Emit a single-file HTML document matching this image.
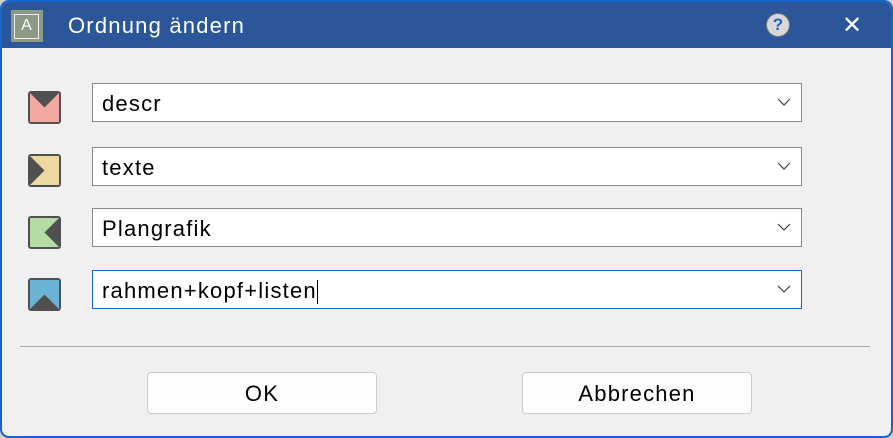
<!DOCTYPE html>
<html><head><meta charset="utf-8"><style>
*{margin:0;padding:0;box-sizing:border-box}
body{width:893px;height:438px;background:#cfcfcf;overflow:hidden;font-family:"Liberation Sans",sans-serif}
.win{position:absolute;left:0;top:0;width:893px;height:438px;border:2px solid #1466cc;border-radius:9px;background:#f0f0f0;overflow:hidden}
.title{position:absolute;left:0;top:0;width:100%;height:46px;background:#2b579a}
.title .t{position:absolute;left:66px;top:11px;color:#fff;font-size:22px;letter-spacing:1.2px}
.appi{position:absolute;left:9px;top:8px;width:32px;height:32px;background:#8c9a84}
.appi div{position:absolute;left:3px;top:4px;width:25px;height:25px;border:1.5px solid #eef;color:#fff;font-size:16px;text-align:center;line-height:22px}
.help{position:absolute;left:764px;top:11px;width:24px;height:24px;border-radius:50%;background:#d8d8d8;border:1.5px solid #777;color:#1c5fc7;font-weight:bold;font-size:17px;text-align:center;line-height:21px}
.close{position:absolute;left:840px;top:9px;color:#fff;font-size:24px}
.ic{position:absolute;left:26px;width:33px;height:33px;border:2px solid #505050;border-radius:3px;overflow:hidden}
.ic svg{display:block}
.f{position:absolute;left:90px;width:710px;height:39px;background:#fff;border:1px solid #8a8a8a;font-size:22px;letter-spacing:1.2px;padding-left:9px;padding-top:2px;line-height:36px;color:#000}
.f.a{border-color:#1466cc}
.f svg{position:absolute;right:10px;top:14px}
.sep{position:absolute;left:18px;top:344px;width:850px;height:1px;background:#a8a8a8}
.btn{position:absolute;top:370px;width:230px;height:42px;background:#fdfdfd;border:1px solid #cbcbcb;border-radius:4px;text-align:center;font-size:22px;letter-spacing:1.2px;line-height:42px;color:#000}
</style></head><body>
<div class="win">
<div class="title"><div class="appi"><div>A</div></div><div class="t">Ordnung ändern</div><div class="help">?</div><div class="close">✕</div></div>

<div class="ic" style="top:89px"><svg width="29" height="29"><rect width="29" height="29" fill="#f0a8a0"/><polygon points="0,0 29,0 14.5,14.5" fill="#505050"/></svg></div>
<div class="ic" style="top:152px"><svg width="29" height="29"><rect width="29" height="29" fill="#ecd8a0"/><polygon points="0,0 14.5,14.5 0,29" fill="#505050"/></svg></div>
<div class="ic" style="top:214px"><svg width="29" height="29"><rect width="29" height="29" fill="#b4dca4"/><polygon points="29,0 14.5,14.5 29,29" fill="#505050"/></svg></div>
<div class="ic" style="top:276px"><svg width="29" height="29"><rect width="29" height="29" fill="#6ab4d6"/><polygon points="0,29 14.5,14.5 29,29" fill="#505050"/></svg></div>

<div class="f" style="top:81px">descr<svg width="14" height="8"><polyline points="1,1 7,7 13,1" fill="none" stroke="#444" stroke-width="1.2"/></svg></div>
<div class="f" style="top:145px">texte<svg width="14" height="8"><polyline points="1,1 7,7 13,1" fill="none" stroke="#444" stroke-width="1.2"/></svg></div>
<div class="f" style="top:206px">Plangrafik<svg width="14" height="8"><polyline points="1,1 7,7 13,1" fill="none" stroke="#444" stroke-width="1.2"/></svg></div>
<div class="f a" style="top:268px">rahmen+kopf+listen<span style="display:inline-block;width:1.5px;height:24px;background:#000;vertical-align:middle"></span><svg width="14" height="8"><polyline points="1,1 7,7 13,1" fill="none" stroke="#444" stroke-width="1.2"/></svg></div>

<div class="sep"></div>
<div class="btn" style="left:145px">OK</div>
<div class="btn" style="left:520px">Abbrechen</div>
</div>
</body></html>
